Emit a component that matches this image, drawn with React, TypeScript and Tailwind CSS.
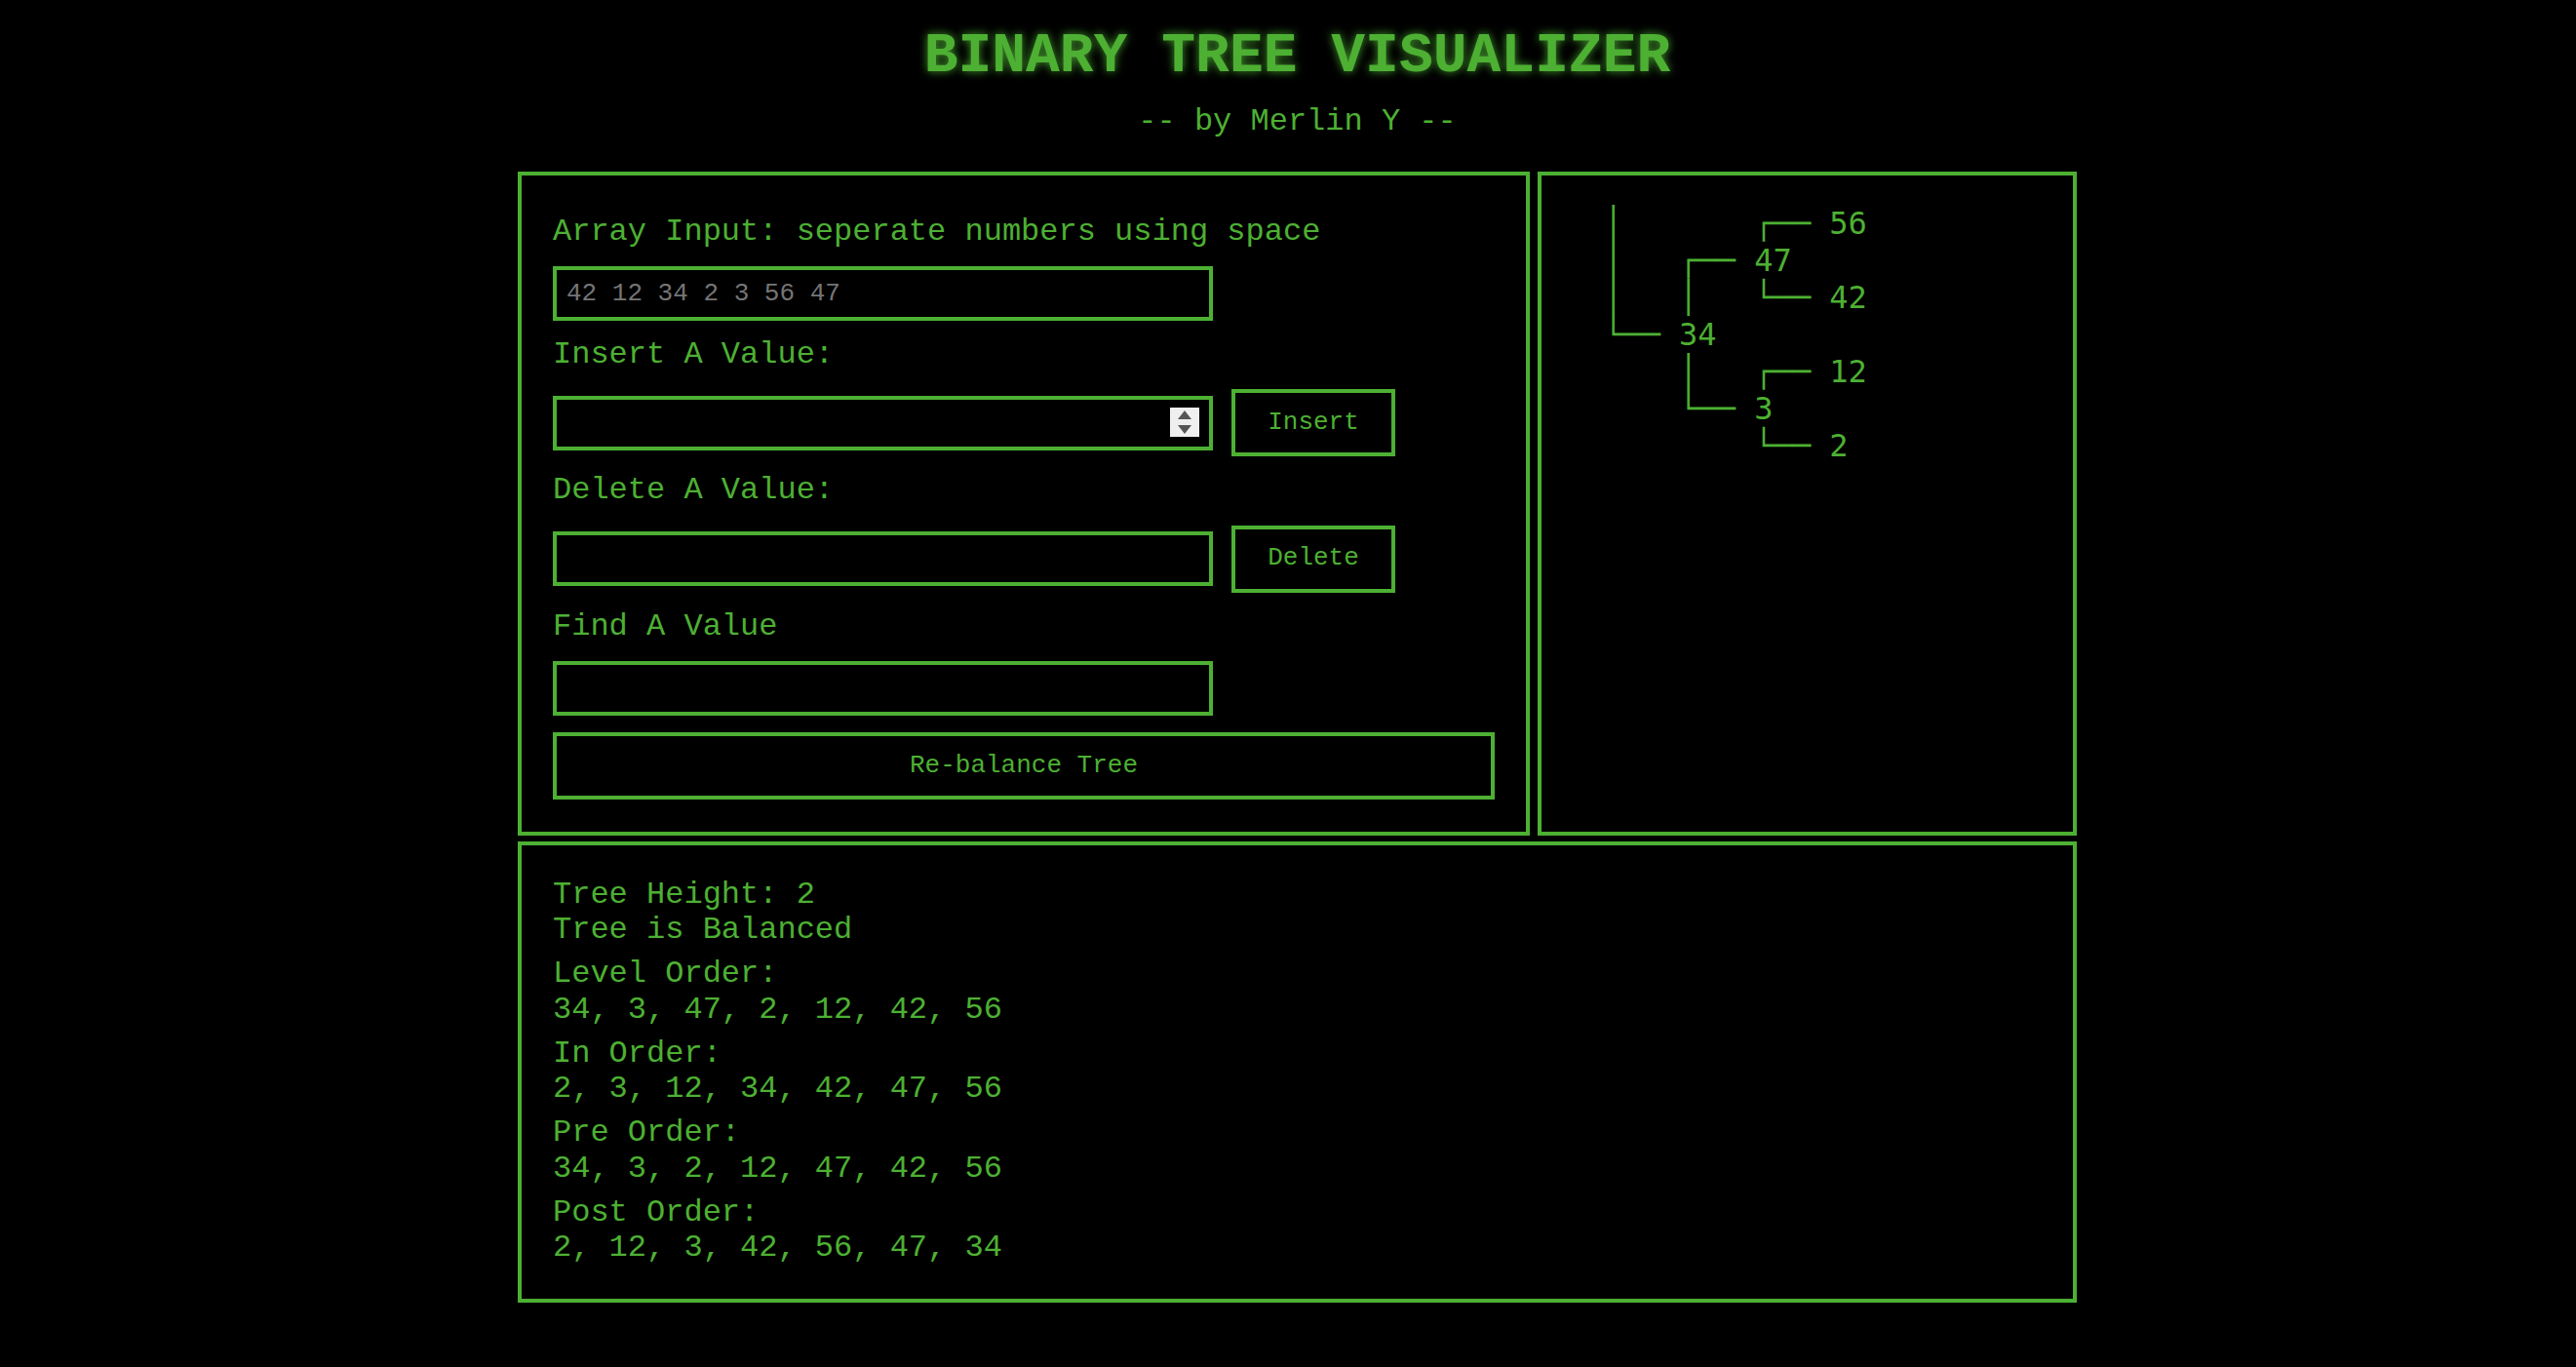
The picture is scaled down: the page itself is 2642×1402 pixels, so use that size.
import React, { useMemo, useState } from "react";

interface TreeNode {
  data: number;
  left: TreeNode | null;
  right: TreeNode | null;
}

// build a balanced tree from a sorted array
const buildTree = (arr: number[], start: number, end: number): TreeNode | null => {
  if (start > end) return null;
  const mid = Math.floor((start + end) / 2);
  return {
    data: arr[mid],
    left: buildTree(arr, start, mid - 1),
    right: buildTree(arr, mid + 1, end),
  };
};

const prettyPrint = (
  node: TreeNode | null,
  out: string[],
  prefix = "",
  isLeft = true
) => {
  if (!node) return out;
  if (node.right) prettyPrint(node.right, out, `${prefix}${isLeft ? "│   " : "    "}`, false);
  out.push(`${prefix}${isLeft ? "└── " : "┌── "}${node.data}`);
  if (node.left) prettyPrint(node.left, out, `${prefix}${isLeft ? "    " : "│   "}`, true);
  return out;
};

const height = (node: TreeNode | null): number =>
  node ? 1 + Math.max(height(node.left), height(node.right)) : -1;

const isBalanced = (node: TreeNode | null): boolean => {
  if (!node) return true;
  if (Math.abs(height(node.left) - height(node.right)) > 1) return false;
  return isBalanced(node.left) && isBalanced(node.right);
};

const levelOrder = (root: TreeNode | null) => {
  const res: number[] = [];
  const queue = root ? [root] : [];
  while (queue.length) {
    const n = queue.shift()!;
    res.push(n.data);
    if (n.left) queue.push(n.left);
    if (n.right) queue.push(n.right);
  }
  return res;
};

const inOrder = (n: TreeNode | null, res: number[] = []): number[] => {
  if (!n) return res;
  inOrder(n.left, res);
  res.push(n.data);
  inOrder(n.right, res);
  return res;
};

const preOrder = (n: TreeNode | null, res: number[] = []): number[] => {
  if (!n) return res;
  res.push(n.data);
  preOrder(n.left, res);
  preOrder(n.right, res);
  return res;
};

const postOrder = (n: TreeNode | null, res: number[] = []): number[] => {
  if (!n) return res;
  postOrder(n.left, res);
  postOrder(n.right, res);
  res.push(n.data);
  return res;
};

const inputClass =
  "w-[677px] h-[56px] bg-black border-4 border-[#4db033] px-[10px] text-[26px] text-[#4db033] outline-none placeholder:text-[#757575]";
const buttonClass =
  "h-[69px] bg-black border-4 border-[#4db033] text-[26px] text-[#4db033]";

export default function App() {
  const [arrayInput, setArrayInput] = useState<string>("");
  const [insertValue, setInsertValue] = useState<string>("");
  const [deleteValue, setDeleteValue] = useState<string>("");
  const [findValue, setFindValue] = useState<string>("");
  const [values] = useState<number[]>([42, 12, 34, 2, 3, 56, 47]);

  const root = useMemo(() => {
    const sorted = [...new Set(values)].sort((a, b) => a - b);
    return buildTree(sorted, 0, sorted.length - 1);
  }, [values]);

  const lines = prettyPrint(root, []);
  const orders = [
    { label: "Level Order:", list: levelOrder(root) },
    { label: "In Order:", list: inOrder(root) },
    { label: "Pre Order:", list: preOrder(root) },
    { label: "Post Order:", list: postOrder(root) },
  ];

  return (
    <div className="min-h-screen bg-black pl-[19px] font-['Liberation_Mono','Courier_New',monospace] leading-[1.133] text-[#4db033]">
      <div className="mx-auto flex w-[1599px] flex-col items-center">
        {/* Header */}
        <h1 className="mt-[25px] text-[58px] font-bold leading-[1.133] [text-shadow:0_0_10px_rgba(77,176,51,0.9)]">
          BINARY TREE VISUALIZER
        </h1>
        <p className="mt-[16px] text-[32px]">-- by Merlin Y --</p>

        <div className="mt-[33px] grid w-full grid-cols-[1038px_553px] gap-x-[8px] gap-y-[6px]">
          {/* Controls */}
          <div className="flex flex-col gap-[17px] border-4 border-[#4db033] px-8 pt-[40px] pb-[33px] text-[32px]">
            <label>Array Input: seperate numbers using space</label>
            <input
              className={inputClass}
              placeholder="42 12 34 2 3 56 47"
              value={arrayInput}
              onChange={(e) => setArrayInput(e.target.value)}
            />
            <label>Insert A Value:</label>
            <div className="flex items-center gap-[19px]">
              <div className="relative">
                <input
                  type="text"
                  className={inputClass}
                  value={insertValue}
                  onChange={(e) => setInsertValue(e.target.value)}
                />
                {/* fake spinner */}
                <div className="absolute right-[14px] top-[12px] flex h-[30px] w-[30px] flex-col items-center justify-center gap-[6px] bg-[#efefef]">
                  <div className="h-0 w-0 border-x-[7px] border-b-[9px] border-x-transparent border-b-[#555]" />
                  <div className="h-0 w-0 border-x-[7px] border-t-[9px] border-x-transparent border-t-[#555]" />
                </div>
              </div>
              <button className={`${buttonClass} w-[168px]`}>Insert</button>
            </div>
            <label>Delete A Value:</label>
            <div className="flex items-center gap-[19px]">
              <input
                className={inputClass}
                value={deleteValue}
                onChange={(e) => setDeleteValue(e.target.value)}
              />
              <button className={`${buttonClass} w-[168px]`}>Delete</button>
            </div>
            <label>Find A Value</label>
            <input
              className={inputClass}
              value={findValue}
              onChange={(e) => setFindValue(e.target.value)}
            />
            <button className={`${buttonClass} w-full`}>Re-balance Tree</button>
          </div>

          {/* Tree */}
          <div className="border-4 border-[#4db033] pl-[64px] pt-[30px]">
            <pre className="font-['DejaVu_Sans_Mono',monospace] text-[32px] leading-[normal]">
              {lines.join("\n")}
            </pre>
          </div>

          {/* Info */}
          <div className="col-span-2 flex flex-col gap-[9px] border-4 border-[#4db033] pl-8 pt-[33px] pb-[34px] text-[32px]">
            <div>
              <div>Tree Height: {height(root)}</div>
              <div>{isBalanced(root) ? "Tree is Balanced" : "Tree is not Balanced"}</div>
            </div>
            {orders.map((o) => (
              <div key={o.label}>
                <div>{o.label}</div>
                <div>{o.list.join(", ")}</div>
              </div>
            ))}
          </div>
        </div>
      </div>
    </div>
  );
}
